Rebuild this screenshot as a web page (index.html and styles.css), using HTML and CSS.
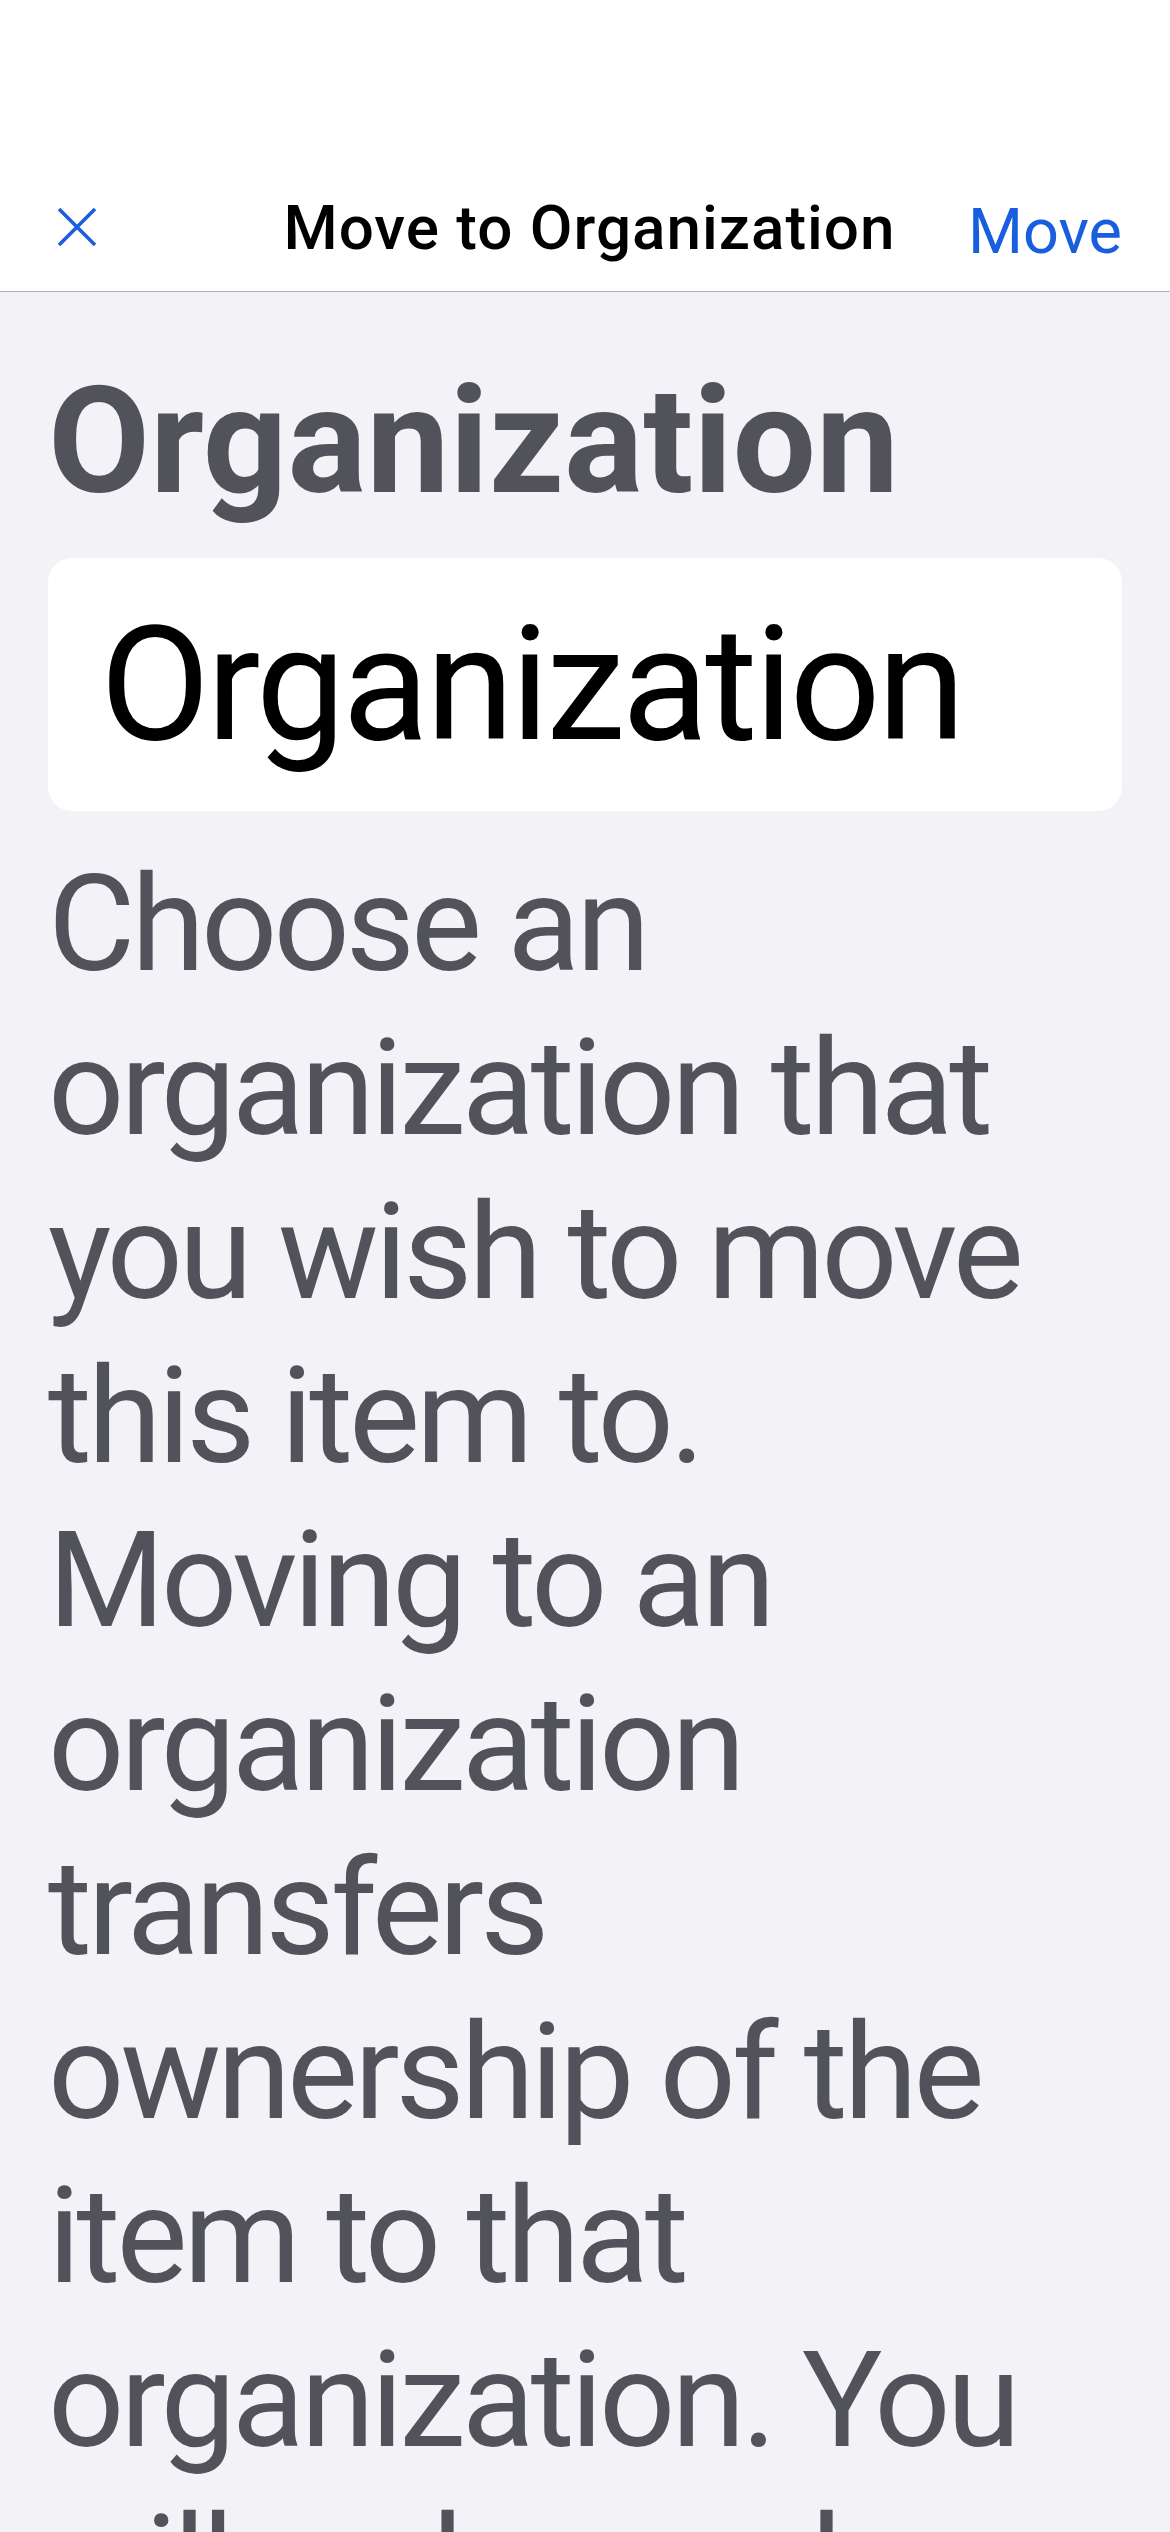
FILE: index.html
```html
<!DOCTYPE html>
<html lang="en">
<head>
<meta charset="utf-8">
<title>Move to Organization</title>
<link rel="stylesheet" href="styles.css">
</head>
<body>
<header class="navbar">
  <div class="nav-row">
    <button class="nav-close" aria-label="Close">
      <svg viewBox="0 0 40 40" width="40" height="40"><path d="M2 2 L38 38 M38 2 L2 38" stroke="#1a5ee0" stroke-width="3.6" fill="none" stroke-linecap="butt"/></svg>
    </button>
    <div class="nav-title">Move to Organization</div>
    <button class="nav-action">Move</button>
  </div>
</header>
<main class="content">
  <h2 class="section-title">Organization</h2>
  <div class="field">Organization</div>
  <p class="help">Choose an organization that you wish to move this item to. Moving to an organization transfers ownership of the item to that organization. You will no longer be the direct owner of this item once it has been moved.</p>
</main>
</body>
</html>
```
FILE: styles.css
```css
html, body {
  margin: 0;
  padding: 0;
}
body {
  background: #f2f2f7;
  font-family: Roboto, Inter, "Noto Sans", sans-serif;
  width: 1170px;
  height: 2532px;
  overflow: hidden;
}
.navbar {
  background: #ffffff;
  height: 292px;
  border-bottom: 1px solid #b0b0b4;
  box-sizing: border-box;
  display: flex;
  align-items: flex-end;
}
.nav-row {
  width: 100%;
  height: 120px;
  display: grid;
  grid-template-columns: 1fr auto 1fr;
  align-items: center;
  padding: 0 48px 0 57px;
  box-sizing: border-box;
  margin-bottom: 4px;
}
.nav-close {
  justify-self: start;
  border: 0;
  background: none;
  padding: 0;
  width: 40px;
  height: 40px;
  display: block;
}
.nav-close svg { display: block; }
.nav-title {
  font-size: 62px;
  font-weight: 500;
  color: #000;
  letter-spacing: 1px;
}
.nav-action {
  justify-self: end;
  border: 0;
  background: none;
  padding: 0;
  font-family: inherit;
  font-size: 63px;
  font-weight: 400;
  color: #1a5ee0;
  margin-top: 8px;
}
.content {
  padding: 0 48px;
}
.section-title {
  margin: 0;
  padding-top: 62px;
  font-size: 148px;
  line-height: 176px;
  font-weight: 700;
  color: #52525a;
}
.field {
  margin-top: 28px;
  background: #ffffff;
  border-radius: 24px;
  height: 253px;
  box-sizing: border-box;
  padding: 0 0 0 52px;
  display: flex;
  align-items: center;
  font-size: 160px;
  color: #000;
  letter-spacing: -3.5px;
}
.help {
  margin: 32px 0 0;
  font-size: 134px;
  line-height: 164px;
  color: #52525a;
  letter-spacing: -4px;
}
```
